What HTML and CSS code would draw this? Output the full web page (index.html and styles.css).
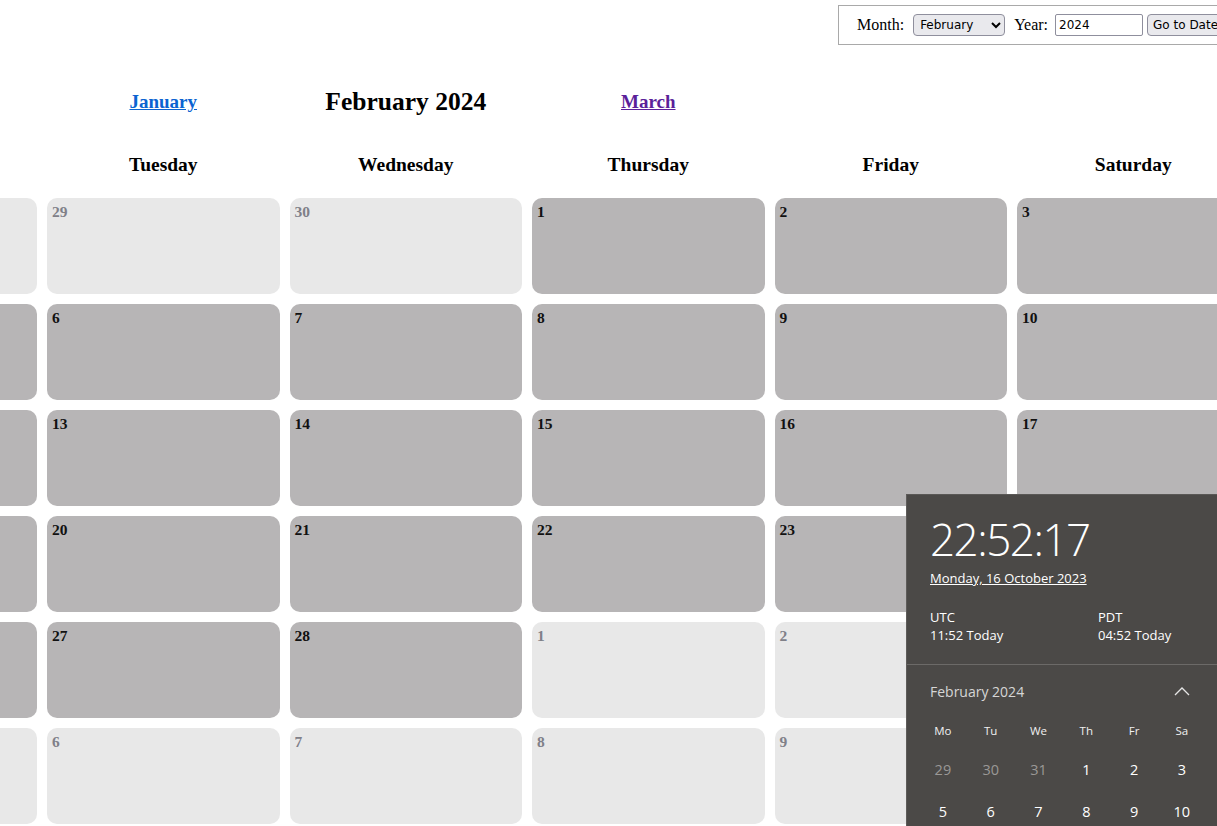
FILE: index.html
```html
<!DOCTYPE html>
<html>
<head>
<meta charset="utf-8">
<link rel="stylesheet" href="styles.css">
</head>
<body>
<div class="topbar">
  <form class="datebox">
    <label class="lbl lbl-month">Month:</label>
    <select class="sel"><option>February</option></select>
    <label class="lbl">Year:</label>
    <input class="inp" type="text" value="2024">
    <button class="btn" type="button">Go to Date</button>
  </form>
</div>

<div class="calendar">
  <div class="row nav">
    <div></div><div></div>
    <div class="navcell"><a class="link prev" href="#">January</a></div>
    <div class="navcell"><h1 class="title">February 2024</h1></div>
    <div class="navcell"><a class="link next" href="#">March</a></div>
    <div></div><div></div>
  </div>
  <div class="row dow">
    <div>Sunday</div><div>Monday</div><div>Tuesday</div><div>Wednesday</div><div>Thursday</div><div>Friday</div><div>Saturday</div>
  </div>
  <div class="weeks">
    <div class="day other"><span>28</span></div>
    <div class="day other"><span>29</span></div>
    <div class="day other"><span>29</span></div>
    <div class="day other"><span>30</span></div>
    <div class="day"><span>1</span></div>
    <div class="day"><span>2</span></div>
    <div class="day"><span>3</span></div>

    <div class="day"><span>4</span></div>
    <div class="day"><span>5</span></div>
    <div class="day"><span>6</span></div>
    <div class="day"><span>7</span></div>
    <div class="day"><span>8</span></div>
    <div class="day"><span>9</span></div>
    <div class="day"><span>10</span></div>

    <div class="day"><span>11</span></div>
    <div class="day"><span>12</span></div>
    <div class="day"><span>13</span></div>
    <div class="day"><span>14</span></div>
    <div class="day"><span>15</span></div>
    <div class="day"><span>16</span></div>
    <div class="day"><span>17</span></div>

    <div class="day"><span>18</span></div>
    <div class="day"><span>19</span></div>
    <div class="day"><span>20</span></div>
    <div class="day"><span>21</span></div>
    <div class="day"><span>22</span></div>
    <div class="day"><span>23</span></div>
    <div class="day"><span>24</span></div>

    <div class="day"><span>25</span></div>
    <div class="day"><span>26</span></div>
    <div class="day"><span>27</span></div>
    <div class="day"><span>28</span></div>
    <div class="day other"><span>1</span></div>
    <div class="day other"><span>2</span></div>
    <div class="day other"><span>3</span></div>

    <div class="day other"><span>4</span></div>
    <div class="day other"><span>5</span></div>
    <div class="day other"><span>6</span></div>
    <div class="day other"><span>7</span></div>
    <div class="day other"><span>8</span></div>
    <div class="day other"><span>9</span></div>
    <div class="day other"><span>10</span></div>
  </div>
</div>

<div class="flyout">
  <div class="clock">
    <div class="time">22:52:17</div>
    <div class="longdate">Monday, 16 October 2023</div>
    <div class="zones">
      <div class="zone"><div>UTC</div><div>11:52 Today</div></div>
      <div class="zone"><div>PDT</div><div>04:52 Today</div></div>
    </div>
  </div>
  <div class="mini">
    <div class="minihead">
      <span class="minititle">February 2024</span>
      <svg class="chev" width="16" height="10" viewBox="0 0 16 10"><path d="M1 9 L8 2 L15 9" fill="none" stroke="#e6e6e6" stroke-width="1.3"/></svg>
    </div>
    <div class="minigrid">
      <div class="wd">Mo</div><div class="wd">Tu</div><div class="wd">We</div><div class="wd">Th</div><div class="wd">Fr</div><div class="wd">Sa</div><div class="wd">Su</div>
      <div class="md dim">29</div><div class="md dim">30</div><div class="md dim">31</div><div class="md">1</div><div class="md">2</div><div class="md">3</div><div class="md">4</div>
      <div class="md">5</div><div class="md">6</div><div class="md">7</div><div class="md">8</div><div class="md">9</div><div class="md">10</div><div class="md">11</div>
    </div>
  </div>
</div>
</body>
</html>
```

FILE: styles.css
```css
html, body {
  margin: 0;
  padding: 0;
  background: #ffffff;
  overflow: hidden;
  width: 1217px;
  height: 826px;
}
body {
  font-family: "Liberation Serif", "Times New Roman", serif;
  color: #000;
}
.topbar {
  height: 46px;
  width: 1700px;
}
.datebox {
  margin: 5px 0 0 838px;
  box-sizing: border-box;
  height: 40px;
  width: 420px;
  border: 1px solid #a9a9a9;
  display: flex;
  align-items: center;
  padding-left: 18px;
  gap: 0;
}
.lbl {
  font-size: 16px;
  margin-right: 7px;
}
.lbl-month {
  margin-right: 9px;
}
.sel {
  width: 92px;
  height: 22px;
  font-family: "DejaVu Sans", sans-serif;
  font-size: 12px;
  border: 1px solid #8f8f9d;
  border-radius: 4px;
  background: #e9e9ed;
  margin-right: 9px;
  padding: 0 2px;
}
.inp {
  width: 88px;
  height: 22px;
  box-sizing: border-box;
  font-family: "DejaVu Sans", sans-serif;
  font-size: 12px;
  border: 1px solid #8f8f9d;
  border-radius: 2px;
  padding: 0 3px;
  margin-right: 4px;
}
.btn {
  height: 22px;
  font-family: "DejaVu Sans", sans-serif;
  font-size: 12px;
  border: 1px solid #8f8f9d;
  border-radius: 4px;
  background: #e9e9ed;
  padding: 0 5px;
  white-space: nowrap;
}

.calendar {
  margin-left: -438px;
  width: 1697.5px;
}
.row {
  display: grid;
  grid-template-columns: repeat(7, 232.5px);
  column-gap: 10px;
}
.nav {
  margin-top: 30px;
  height: 42px;
  align-items: center;
}
.navcell {
  text-align: center;
}
.link {
  font-size: 19px;
  font-weight: bold;
  text-decoration: underline;
}
.prev { color: #0b63d1; }
.next { color: #5b1f9a; }
.title {
  margin: 0;
  font-size: 25.5px;
  font-weight: bold;
}
.dow {
  margin-top: 20px;
  height: 44px;
  align-items: center;
  text-align: center;
  font-size: 19.5px;
  font-weight: bold;
}
.weeks {
  margin-top: 11px;
  display: grid;
  grid-template-columns: repeat(7, 232.5px);
  grid-auto-rows: 96px;
  gap: 10px;
}
.day {
  background: #b7b5b6;
  border-radius: 10px;
  padding: 5px 5px;
  font-size: 15.5px;
  font-weight: bold;
  color: #111;
  line-height: 18px;
}
.day.other {
  background: #e8e8e8;
  color: #808088;
}

.flyout {
  position: fixed;
  left: 906px;
  top: 494px;
  width: 360px;
  height: 420px;
  background: #4b4947;
  border-left: 1px solid #5e5c5a;
  border-top: 1px solid #5a5856;
  box-sizing: border-box;
  font-family: "Open Sans", "Noto Sans", sans-serif;
  color: #fff;
}
.clock {
  padding: 18px 0 0 23px;
  height: 170px;
  box-sizing: border-box;
  border-bottom: 1px solid #6c6a68;
}
.time {
  font-size: 44px;
  font-weight: 300;
  line-height: 52px;
  letter-spacing: -1.5px;
}
.longdate {
  font-size: 13px;
  text-decoration: underline;
  margin-top: 4px;
  line-height: 18px;
}
.zones {
  display: flex;
  margin-top: 21px;
  font-size: 13px;
  line-height: 18px;
}
.zone {
  width: 168px;
}
.mini {
  padding: 0 0 0 12px;
}
.minihead {
  display: flex;
  align-items: center;
  height: 52px;
  padding-left: 11px;
  width: 260px;
  justify-content: space-between;
}
.minititle {
  font-size: 14px;
  color: #d6d6d6;
}
.chev {
  margin-right: 0;
}
.minigrid {
  display: grid;
  grid-template-columns: repeat(7, 47.8px);
  grid-template-rows: 27px 42px 42px;
  text-align: center;
  align-items: center;
}
.wd {
  font-size: 11.5px;
  color: #f0f0f0;
}
.md {
  font-size: 14.5px;
  color: #fff;
  padding-top: 8px;
}
.md.dim {
  color: #9a9896;
}
```
